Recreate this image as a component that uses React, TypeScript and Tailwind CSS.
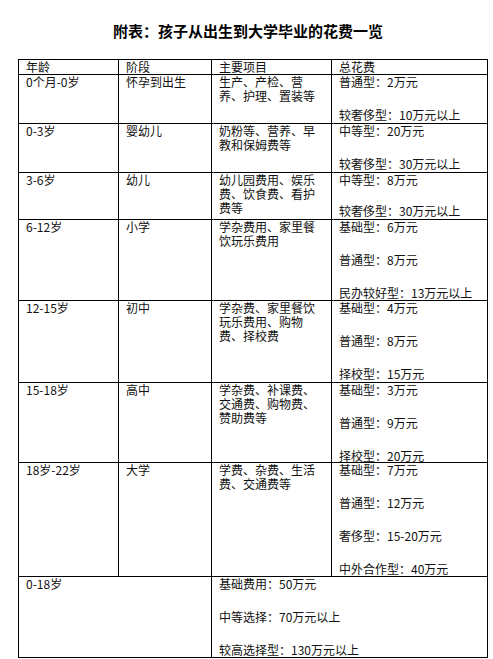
import React from "react";

type TRow = {
  age: string;
  stage: string;
  items: string[];
  costs: string[];
  h: string;
  gap?: string;
};

const rows: TRow[] = [
  { age: "0个月-0岁", stage: "怀孕到出生", items: ["生产、产检、营", "养、护理、置装等"], costs: ["普通型：2万元", "较奢侈型：10万元以上"], h: "h-[49px]" },
  { age: "0-3岁", stage: "婴幼儿", items: ["奶粉等、营养、早", "教和保姆费等"], costs: ["中等型：20万元", "较奢侈型：30万元以上"], h: "h-[49px]" },
  { age: "3-6岁", stage: "幼儿", items: ["幼儿园费用、娱乐", "费、饮食费、看护", "费等"], costs: ["中等型：8万元", "较奢侈型：30万元以上"], h: "h-[47px]", gap: "gap-[17px]" },
  { age: "6-12岁", stage: "小学", items: ["学杂费用、家里餐", "饮玩乐费用"], costs: ["基础型：6万元", "普通型：8万元", "民办较好型：13万元以上"], h: "h-[81px]" },
  { age: "12-15岁", stage: "初中", items: ["学杂费、家里餐饮", "玩乐费用、购物", "费、择校费"], costs: ["基础型：4万元", "普通型：8万元", "择校型：15万元"], h: "h-[82px]" },
  { age: "15-18岁", stage: "高中", items: ["学杂费、补课费、", "交通费、购物费、", "赞助费等"], costs: ["基础型：3万元", "普通型：9万元", "择校型：20万元"], h: "h-[80px]" },
  { age: "18岁-22岁", stage: "大学", items: ["学费、杂费、生活", "费、交通费等"], costs: ["基础型：7万元", "普通型：12万元", "奢侈型：15-20万元", "中外合作型：40万元"], h: "h-[114px]" },
];

const Cell: React.FC<{ className?: string; children: React.ReactNode }> = ({ className = "", children }) => (
  <div className={`border-r border-b border-black pl-[7px] whitespace-nowrap ${className}`}>{children}</div>
);

const Costs: React.FC<{ list: string[]; gap?: string }> = ({ list, gap = "gap-[19px]" }) => (
  <div className={`flex flex-col ${gap}`}>
    {list.map((c) => (
      <div key={c}>{c}</div>
    ))}
  </div>
);

export default function App() {
  return (
    <div
      className="w-[493px] h-[659px] bg-white text-[#111] text-[12px] leading-[14px] overflow-hidden"
      style={{ fontFamily: '"Noto Sans CJK SC", "Noto Sans", sans-serif' }}
    >
      <div className="h-[59px] flex items-start justify-center pt-[22px] pl-[3px]">
        <h1 className="text-[15px] leading-[18px] font-bold text-black">附表：孩子从出生到大学毕业的花费一览</h1>
      </div>
      <div className="ml-[18px] w-[470px] border-l border-t border-black grid grid-cols-[100px_93px_120px_156px]">
        <Cell className="h-[15px]">年龄</Cell>
        <Cell className="h-[15px]">阶段</Cell>
        <Cell className="h-[15px]">主要项目</Cell>
        <Cell className="h-[15px]">总花费</Cell>
        {rows.map((r) => (
          <React.Fragment key={r.age}>
            <Cell className={r.h}>{r.age}</Cell>
            <Cell className={r.h}>{r.stage}</Cell>
            <Cell className={r.h}>
              {r.items.map((t) => (
                <div key={t}>{t}</div>
              ))}
            </Cell>
            <Cell className={r.h}>
              <Costs list={r.costs} gap={r.gap} />
            </Cell>
          </React.Fragment>
        ))}
        <Cell className="h-[81px] col-span-2">0-18岁</Cell>
        <Cell className="h-[81px] col-span-2">
          <Costs list={["基础费用：50万元", "中等选择：70万元以上", "较高选择型：130万元以上"]} />
        </Cell>
      </div>
    </div>
  );
}
